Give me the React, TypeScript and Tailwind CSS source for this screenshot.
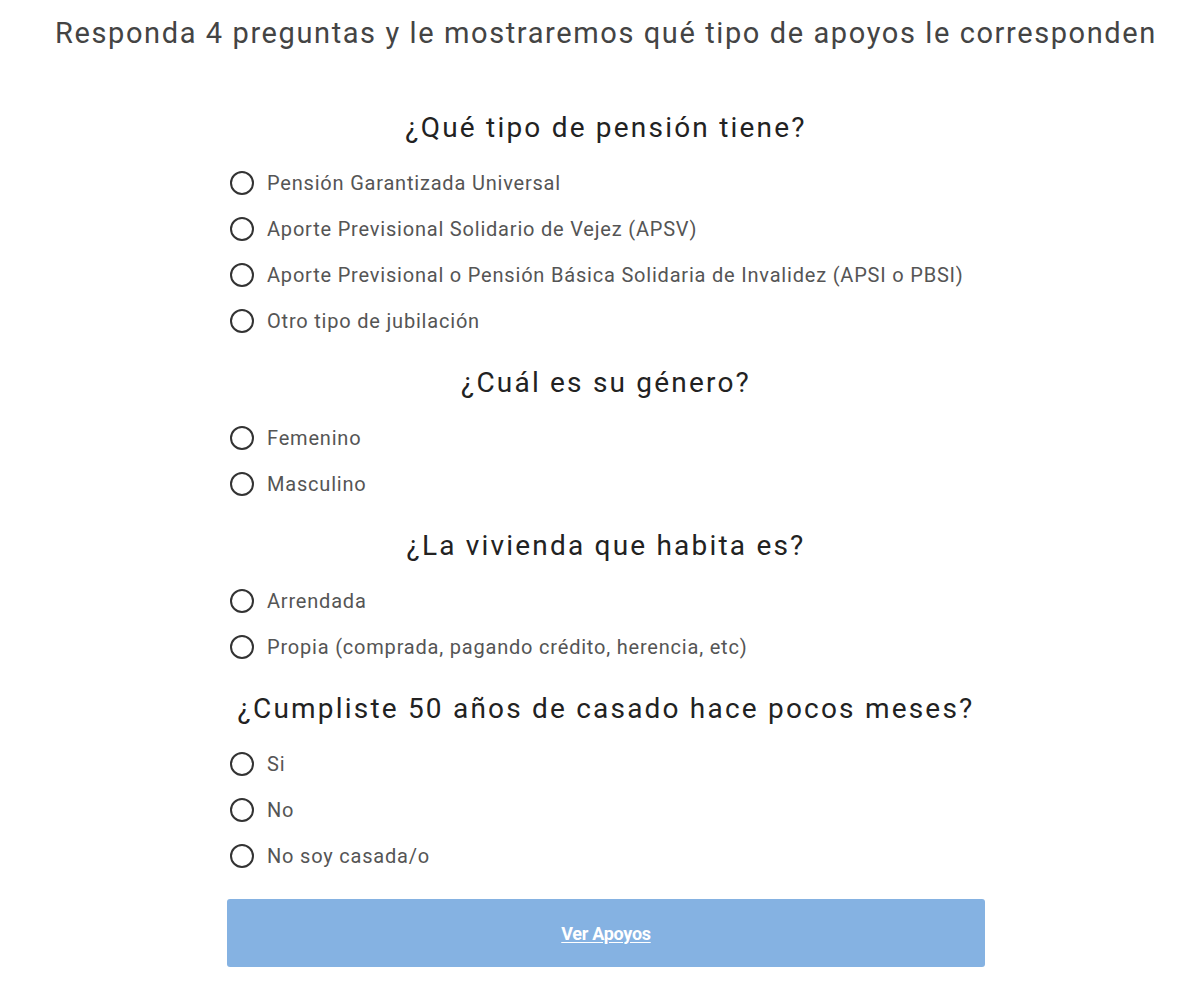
const questions = [
  {
    title: '¿Qué tipo de pensión tiene?',
    options: [
      'Pensión Garantizada Universal',
      'Aporte Previsional Solidario de Vejez (APSV)',
      'Aporte Previsional o Pensión Básica Solidaria de Invalidez (APSI o PBSI)',
      'Otro tipo de jubilación',
    ],
  },
  {
    title: '¿Cuál es su género?',
    options: ['Femenino', 'Masculino'],
  },
  {
    title: '¿La vivienda que habita es?',
    options: ['Arrendada', 'Propia (comprada, pagando crédito, herencia, etc)'],
  },
  {
    title: '¿Cumpliste 50 años de casado hace pocos meses?',
    options: ['Si', 'No', 'No soy casada/o'],
  },
]

export default function App() {
  return (
    <div className="min-h-screen bg-white pl-[12px] pt-[13px] font-['Roboto',sans-serif]">
      <h1 className="h-[40px] whitespace-nowrap text-center text-[29px] leading-[40px] tracking-[1.6px] text-[#444]">
        Responda 4 preguntas y le mostraremos qué tipo de apoyos le corresponden
      </h1>

      <div className="mx-auto mt-[55px] w-[758px]">
        {questions.map((q, i) => (
          <section key={q.title} className={i === 0 ? '' : 'mt-[19px]'}>
            <h2 className="mb-[12px] h-[40px] whitespace-nowrap text-center text-[28px] leading-[40px] tracking-[2.2px] text-[#222]">
              {q.title}
            </h2>
            {q.options.map((opt) => (
              <label key={opt} className="flex h-[46px] items-center pl-[3px]">
                <span className="h-[24px] w-[24px] shrink-0 rounded-full border-2 border-[#333]" />
                <span className="ml-[13px] whitespace-nowrap text-[20px] tracking-[0.8px] text-[#555]">
                  {opt}
                </span>
              </label>
            ))}
          </section>
        ))}

        <button className="mt-[20px] flex h-[68px] w-full items-center justify-center rounded-[3px] bg-[#85b2e2]">
          <span className="text-[18px] font-bold tracking-[-0.3px] text-white underline underline-offset-2">
            Ver Apoyos
          </span>
        </button>
      </div>
    </div>
  )
}
